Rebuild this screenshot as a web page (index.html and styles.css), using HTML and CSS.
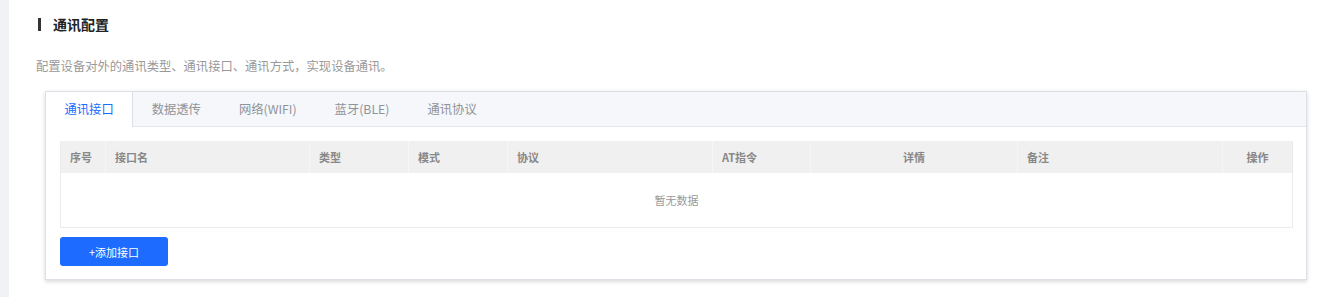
FILE: index.html
```html
<!DOCTYPE html>
<html lang="zh-CN">
  <head>
    <meta charset="UTF-8" />
    <meta name="viewport" content="width=device-width, initial-scale=1.0" />
    <title>通讯配置</title>
    <link rel="stylesheet" href="styles.css">
  </head>
  <body>
    <div class="side"></div>
    <div class="main">
      <div class="titulo">
        <span class="barra"></span>
        <span>通讯配置</span>
      </div>
      <p class="desc">配置设备对外的通讯类型、通讯接口、通讯方式，实现设备通讯。</p>

      <div class="card">
        <div class="tabs">
          <div class="tab activo">通讯接口</div>
          <div class="tab">数据透传</div>
          <div class="tab">网络(WIFI)</div>
          <div class="tab">蓝牙(BLE)</div>
          <div class="tab">通讯协议</div>
        </div>
        <div class="contenido">
          <table class="tabla">
            <colgroup>
              <col style="width: 45px" />
              <col style="width: 204px" />
              <col style="width: 99px" />
              <col style="width: 99px" />
              <col style="width: 205px" />
              <col style="width: 98px" />
              <col style="width: 207px" />
              <col style="width: 205px" />
              <col style="width: 70px" />
            </colgroup>
            <thead>
              <tr>
                <th>序号</th>
                <th>接口名</th>
                <th>类型</th>
                <th>模式</th>
                <th>协议</th>
                <th>AT指令</th>
                <th class="centro">详情</th>
                <th>备注</th>
                <th class="centro">操作</th>
              </tr>
            </thead>
            <tbody>
              <tr>
                <td class="vacio" colspan="9">暂无数据</td>
              </tr>
            </tbody>
          </table>
          <button class="btn">+添加接口</button>
        </div>
      </div>
    </div>
  </body>
</html>
```

FILE: styles.css
```css
body {
  margin: 0;
  display: flex;
  min-height: 100vh;
  font-family: "Noto Sans CJK SC", "Liberation Sans", sans-serif;
  color: #333;
  background-color: #fff;
}

.side {
  width: 10px;
  background-color: #f0f2f5;
}

.main {
  flex: 1;
  padding: 14px 33px 0 27px;
}

.titulo {
  display: flex;
  align-items: center;
  height: 20px;
  padding-left: 2px;
  font-size: 14px;
  font-weight: bold;
  color: #222;
}

.barra {
  width: 3px;
  height: 13px;
  margin-right: 12px;
  background-color: #333;
}

.desc {
  margin: 22px 0 0;
  height: 20px;
  line-height: 20px;
  font-size: 12.3px;
  color: #999;
}

.card {
  margin: 15px 0 0 9px;
  border: 1px solid #dcdfe6;
  background-color: #fff;
  box-shadow: 0 2px 4px 0 rgba(0, 0, 0, 0.12), 0 0 6px 0 rgba(0, 0, 0, 0.04);
}

.tabs {
  display: flex;
  height: 34px;
  background-color: #f5f7fa;
  border-bottom: 1px solid #e4e7ed;
}

.tab {
  padding: 0 18.5px;
  line-height: 34px;
  font-size: 12.3px;
  color: #909399;
  border-right: 1px solid transparent;
}

.tab.activo {
  height: 35px;
  background-color: #fff;
  border-right-color: #dcdfe6;
  color: #1a6dff;
}

.contenido {
  padding: 14px 13px 13px 14px;
}

.tabla {
  width: 1232px;
  table-layout: fixed;
  border-collapse: collapse;
  border: 1px solid #ebebeb;
  border-top: none;
}

.tabla th {
  height: 32px;
  padding: 0 9px;
  text-align: left;
  font-size: 11px;
  font-weight: bold;
  color: #888;
  background-color: #f0f0f0;
  border-right: 1px solid #f6f6f6;
}

.tabla th:last-child {
  border-right: none;
}

.tabla .centro {
  text-align: center;
}

.vacio {
  height: 52px;
  text-align: center;
  font-size: 11px;
  color: #999;
}

.btn {
  display: block;
  width: 108px;
  height: 29px;
  margin-top: 9px;
  border: none;
  border-radius: 3px;
  background-color: #1d6cff;
  color: #fff;
  font-family: inherit;
  font-size: 11px;
  cursor: pointer;
}
```
